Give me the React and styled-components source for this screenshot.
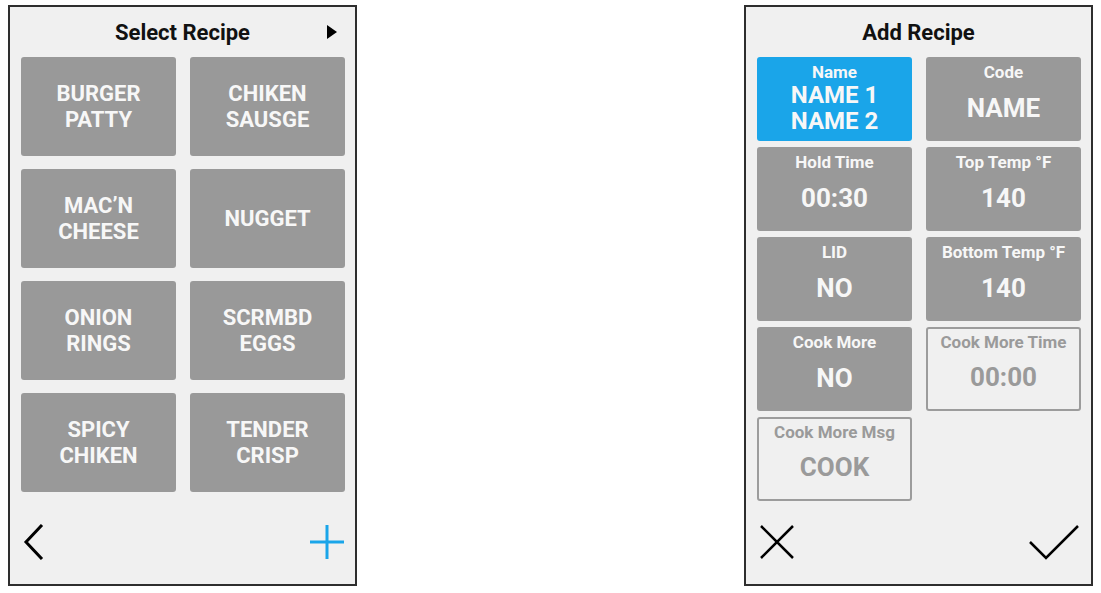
import styled, { createGlobalStyle } from "styled-components";

const Global = createGlobalStyle`
  body {
    margin: 0;
    background: #ffffff;
    font-family: Roboto, "Liberation Sans", sans-serif;
  }
`

const Page = styled.div`
  display: flex;
  justify-content: space-between;
  padding: 5px 8px;
  width: 1101px;
  box-sizing: border-box;
`

const Panel = styled.div`
  width: 349px;
  height: 581px;
  box-sizing: border-box;
  border: 2px solid #2e2e2e;
  background: #f0f0f0;
  display: flex;
  flex-direction: column;
`

const Header = styled.div`
  position: relative;
  height: 50px;
  display: flex;
  align-items: center;
  justify-content: center;
  font-size: 22px;
  font-weight: 700;
  color: #111;
`

const NextArrow = styled.div`
  position: absolute;
  right: 18px;
  top: 18px;
  width: 0;
  height: 0;
  border-top: 7px solid transparent;
  border-bottom: 7px solid transparent;
  border-left: 10px solid #000;
`

const Grid = styled.div`
  display: grid;
  grid-template-columns: 155px 155px;
  grid-auto-rows: ${p => p.rowHeight}px;
  column-gap: 14px;
  row-gap: ${p => p.rowGap}px;
  padding: 0 11px;
`

const RecipeTile = styled.div`
  background: #999999;
  border-radius: 3px;
  display: flex;
  align-items: center;
  justify-content: center;
  text-align: center;
  color: #f7f7f7;
  font-size: 22px;
  font-weight: 700;
  line-height: 26px;
  white-space: pre-line;
`

const Field = styled.div`
  box-sizing: border-box;
  border-radius: 3px;
  display: flex;
  flex-direction: column;
  align-items: center;
  padding: 5px 0 7px;
  background: ${p => p.active ? '#1aa5e9' : p.outline ? '#f0f0f0' : '#999999'};
  border: ${p => p.outline ? '2px solid #9c9c9c' : 'none'};
  color: ${p => p.outline ? '#9a9a9a' : '#f7f7f7'};
  padding-top: ${p => p.outline ? '3px' : '5px'};
`

const Label = styled.div`
  font-size: 17px;
  font-weight: 700;
  line-height: 20px;
`

const Value = styled.div`
  flex: 1;
  display: flex;
  align-items: center;
  justify-content: center;
  text-align: center;
  font-size: ${p => p.small ? '24px' : '26px'};
  font-weight: 700;
  line-height: 26px;
  white-space: pre-line;
`

const Footer = styled.div`
  margin-top: auto;
  display: flex;
  justify-content: space-between;
  align-items: center;
  padding: 0 ${p => p.padRight}px 24px ${p => p.padLeft}px;
  height: 36px;
`

const recipes = [
  "BURGER\nPATTY", "CHIKEN\nSAUSGE",
  "MAC’N\nCHEESE", "NUGGET",
  "ONION\nRINGS", "SCRMBD\nEGGS",
  "SPICY\nCHIKEN", "TENDER\nCRISP",
]

const fields = [
  { label: "Name", value: "NAME 1\nNAME 2", active: true, small: true },
  { label: "Code", value: "NAME" },
  { label: "Hold Time", value: "00:30" },
  { label: "Top Temp °F", value: "140" },
  { label: "LID", value: "NO" },
  { label: "Bottom Temp °F", value: "140" },
  { label: "Cook More", value: "NO" },
  { label: "Cook More Time", value: "00:00", outline: true },
  { label: "Cook More Msg", value: "COOK", outline: true },
]

function App() {
  return (
    <Page>
      <Global />
      <Panel>
        <Header>
          Select Recipe
          <NextArrow />
        </Header>
        <Grid rowHeight={99} rowGap={13}>
          {recipes.map(r => <RecipeTile key={r}>{r}</RecipeTile>)}
        </Grid>
        <Footer padLeft={13} padRight={10}>
          <svg width="22" height="36" viewBox="0 0 22 36">
            <polyline points="19,1 3,18 19,35" fill="none" stroke="#000" strokeWidth="3" />
          </svg>
          <svg width="36" height="36" viewBox="0 0 36 36">
            <path d="M18 1 V35 M1 18 H35" stroke="#1aa5e9" strokeWidth="3" />
          </svg>
        </Footer>
      </Panel>

      <Panel>
        <Header>Add Recipe</Header>
        <Grid rowHeight={84} rowGap={6}>
          {fields.map(f => (
            <Field key={f.label} active={f.active} outline={f.outline}>
              <Label>{f.label}</Label>
              <Value small={f.small}>{f.value}</Value>
            </Field>
          ))}
        </Grid>
        <Footer padLeft={13} padRight={12}>
          <svg width="36" height="36" viewBox="0 0 36 36">
            <path d="M2 2 L34 34 M34 2 L2 34" stroke="#000" strokeWidth="2.5" />
          </svg>
          <svg width="50" height="36" viewBox="0 0 50 36">
            <polyline points="1,18 17,34 49,2" fill="none" stroke="#000" strokeWidth="2.5" />
          </svg>
        </Footer>
      </Panel>
    </Page>
  );
}

export default App;
